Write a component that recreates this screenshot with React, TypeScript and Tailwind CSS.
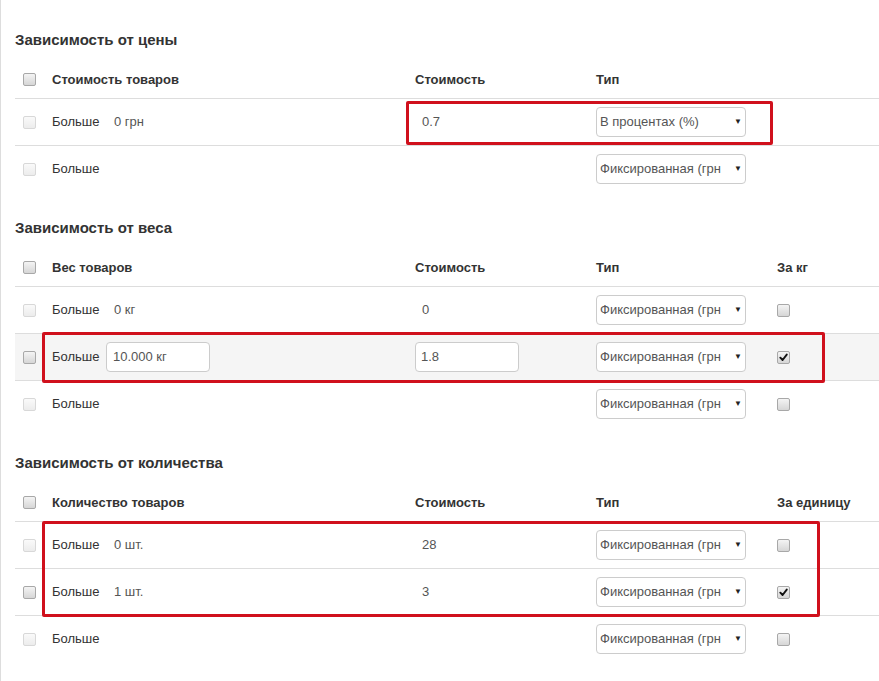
import React from "react";

type CB = { enabled?: boolean; checked?: boolean };

function Check({ enabled, checked }: CB) {
  return (
    <div
      className={
        "w-[13px] h-[13px] rounded-[2px] border flex items-center justify-center " +
        (enabled
          ? "border-[#a8a8a8] bg-gradient-to-b from-[#f4f4f4] to-[#d6d6d6]"
          : "border-[#d8d8d8] bg-gradient-to-b from-[#fafafa] to-[#ececec]")
      }
    >
      {checked && (
        <svg width="9" height="9" viewBox="0 0 10 10">
          <path d="M1.5 5.2 L4 7.8 L8.6 1.8" fill="none" stroke="#111" strokeWidth="2.1" strokeLinecap="round" strokeLinejoin="round" />
        </svg>
      )}
    </div>
  );
}

function Select({ label }: { label: string }) {
  return (
    <div className="w-[150px] h-[30px] border border-[#cccccc] rounded-[4px] bg-white flex items-center pl-[3px]">
      <span className="w-[121px] text-[13px] text-[#555] whitespace-nowrap">{label}</span>
      <span className="ml-[13px] text-[8px] text-[#222] leading-none">▼</span>
    </div>
  );
}

type Row = {
  enabled?: boolean;
  value?: string;
  valueInput?: boolean;
  cost?: string;
  costInput?: boolean;
  type: string;
  per?: "off" | "on" | null;
  gray?: boolean;
};

function TableRow({ r, showPer }: { r: Row; showPer: boolean }) {
  return (
    <div className={"grid grid-cols-[28px_364px_181px_181px_1fr] h-[47px] border-t border-[#dddddd] items-center " + (r.gray ? "bg-[#f5f5f5]" : "")}>
      <div className="pl-2">
        <Check enabled={r.enabled} />
      </div>
      <div className="pl-[9px] flex items-center">
        <span className="w-[54px] text-[13px] text-[#333]">Больше</span>
        {r.value !== undefined &&
          (r.valueInput ? (
            <div className="w-[104px] h-[30px] border border-[#cccccc] rounded-[4px] bg-white flex items-center pl-[6px] text-[13px] text-[#555]">
              {r.value}
            </div>
          ) : (
            <div className="w-[104px] pl-[8px] text-[13px] text-[#555]">{r.value}</div>
          ))}
      </div>
      <div className="pl-2">
        {r.cost !== undefined &&
          (r.costInput ? (
            <div className="w-[104px] h-[30px] border border-[#cccccc] rounded-[4px] bg-white flex items-center pl-[5px] text-[13px] text-[#555]">
              {r.cost}
            </div>
          ) : (
            <div className="w-[104px] pl-[7px] text-[13px] text-[#555]">{r.cost}</div>
          ))}
      </div>
      <div className="pl-2">
        <Select label={r.type} />
      </div>
      <div className="pl-2">{showPer && <Check enabled checked={r.per === "on"} />}</div>
    </div>
  );
}

function Section({
  title,
  col,
  per,
  rows,
  top,
}: {
  title: string;
  col: string;
  per?: string;
  rows: Row[];
  top: string;
}) {
  return (
    <div className={top}>
      <h2 className="h-[20px] leading-[20px] text-[15px] font-bold text-[#333] pl-[14px]">{title}</h2>
      <div className="ml-[14px] mt-[10px]">
        <div className="grid grid-cols-[28px_364px_181px_181px_1fr] h-[38px] pt-[1px] items-center text-[13px] font-bold text-[#333]">
          <div className="pl-2">
            <Check enabled />
          </div>
          <div className="pl-[9px]">{col}</div>
          <div className="pl-2">Стоимость</div>
          <div className="pl-2">Тип</div>
          <div className="pl-2">{per}</div>
        </div>
        {rows.map((r, i) => (
          <TableRow key={i} r={r} showPer={!!per} />
        ))}
      </div>
    </div>
  );
}

const FIX = "Фиксированная (грн";

export default function App() {
  return (
    <div
      className="relative w-[879px] h-[681px] bg-white border-l border-[#dddddd] overflow-hidden"
      style={{ fontFamily: '"Liberation Sans", Arial, sans-serif' }}
    >
      <Section
        top="pt-[30px]"
        title="Зависимость от цены"
        col="Стоимость товаров"
        rows={[
          { value: "0 грн", cost: "0.7", type: "В процентах (%)" },
          { type: FIX },
        ]}
      />
      <Section
        top="pt-[26px]"
        title="Зависимость от веса"
        col="Вес товаров"
        per="За кг"
        rows={[
          { value: "0 кг", cost: "0", type: FIX, per: "off" },
          { enabled: true, gray: true, value: "10.000 кг", valueInput: true, cost: "1.8", costInput: true, type: FIX, per: "on" },
          { type: FIX, per: "off" },
        ]}
      />
      <Section
        top="pt-[26px]"
        title="Зависимость от количества"
        col="Количество товаров"
        per="За единицу"
        rows={[
          { value: "0 шт.", cost: "28", type: FIX, per: "off" },
          { enabled: true, value: "1 шт.", cost: "3", type: FIX, per: "on" },
          { type: FIX, per: "off" },
        ]}
      />

      {/* red annotation frames */}
      <div className="absolute left-[405px] top-[101px] w-[367px] h-[44px] border-[3px] border-[#d0101c] rounded-[2px]" />
      <div className="absolute left-[41px] top-[332px] w-[783px] h-[51px] border-[3px] border-[#d0101c] rounded-[2px]" />
      <div className="absolute left-[41px] top-[521px] w-[778px] h-[96px] border-[3px] border-[#d0101c] rounded-[2px]" />
    </div>
  );
}
